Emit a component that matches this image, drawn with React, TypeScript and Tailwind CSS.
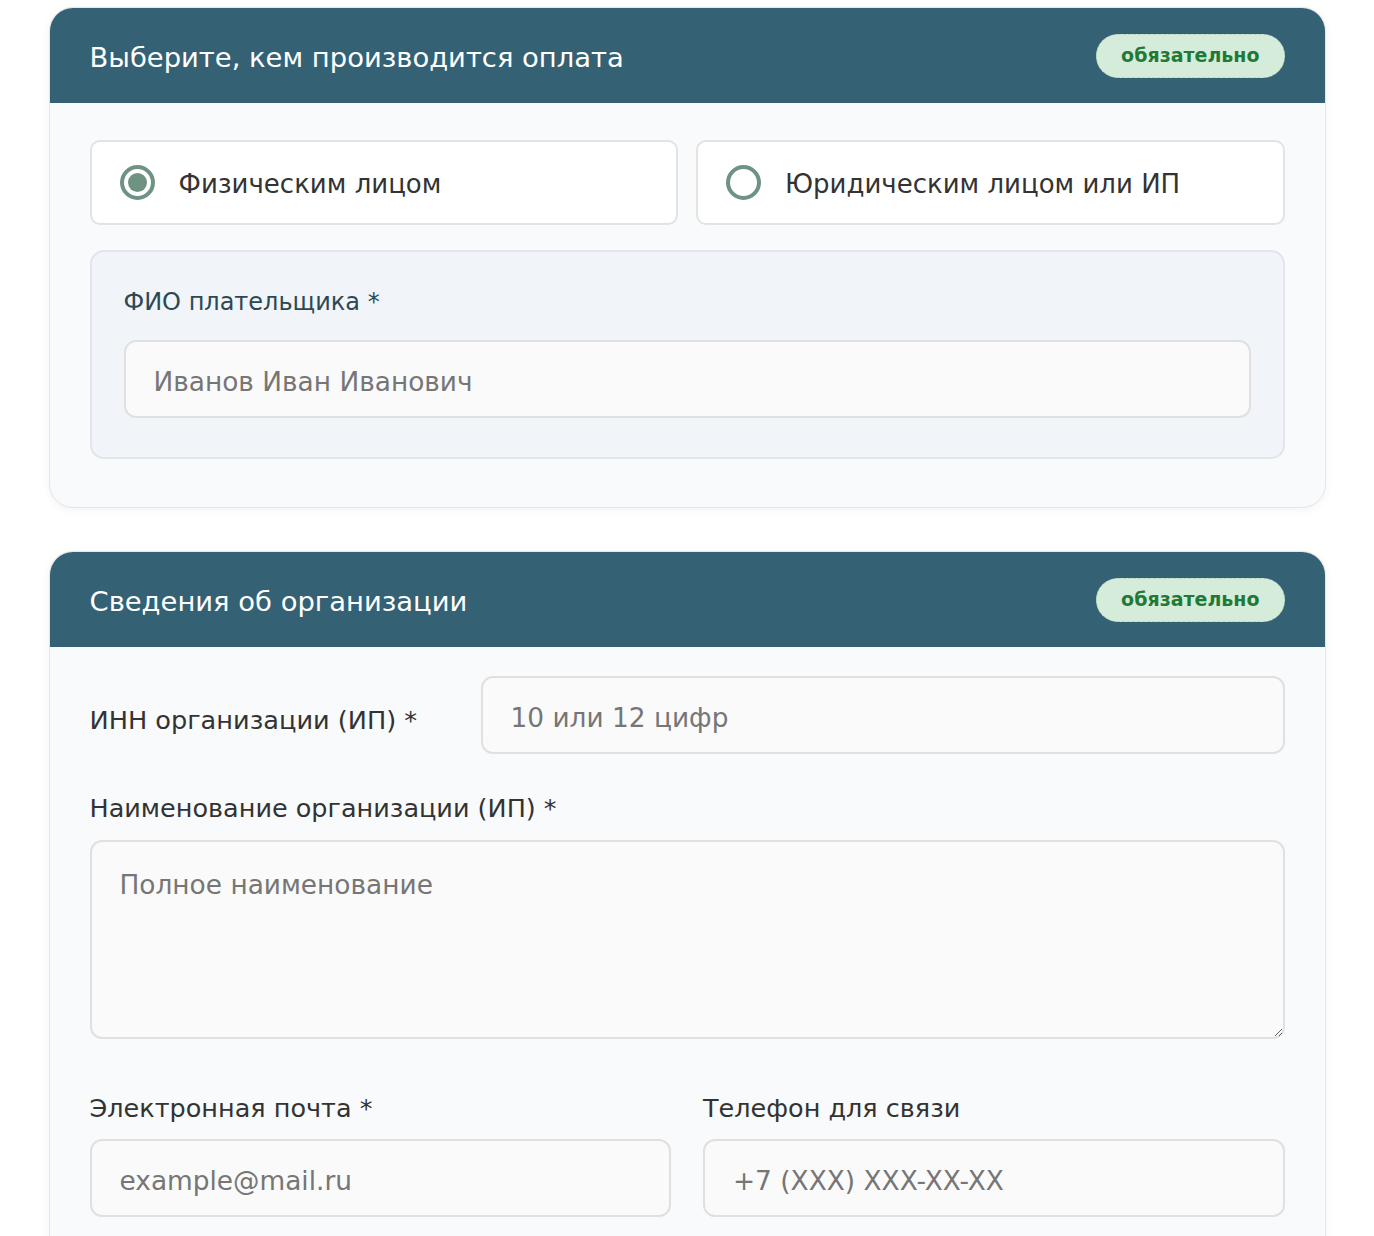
import React from "react";

function Badge() {
  return (
    <span className="inline-flex h-[44px] items-center rounded-full border border-dashed border-[#b9d8c0] bg-[#d5ecdb] px-[24px] text-[19px] font-bold leading-none text-[#1f7a38]">
      обязательно
    </span>
  );
}

function CardHeader({ title }: { title: string }) {
  return (
    <div className="flex h-[95px] items-center justify-between bg-[#346274] px-[40px]">
      <h2 className="pt-[4px] text-[27.4px] font-normal leading-none text-white">{title}</h2>
      <Badge />
    </div>
  );
}

function Radio({ checked, label }: { checked: boolean; label: string }) {
  return (
    <label className="flex h-[85px] items-center rounded-[10px] border-2 border-[#e3e3e3] bg-white pl-[28px]">
      <span className="flex h-[35px] w-[35px] shrink-0 items-center justify-center rounded-full border-[4px] border-[#6f9383] bg-white">
        {checked && <span className="h-[19px] w-[19px] rounded-full bg-[#6f9383]" />}
      </span>
      <span className="ml-[24px] pt-[3px] text-[26px] leading-none text-[#333333]">{label}</span>
    </label>
  );
}

const inputCls =
  "h-[78px] w-full rounded-[12px] border-2 border-[#e0e0e0] bg-[#fafafa] px-[28px] pt-[4px] text-[26.4px] text-[#333] outline-none placeholder:text-[#767676]";

export default function App() {
  return (
    <div className="min-h-[1236px] bg-white pt-[7px] font-['DejaVu_Sans',sans-serif]">
      <div className="mx-auto flex w-[1277px] flex-col gap-[43px]">
        {/* Card 1 */}
        <section className="overflow-hidden rounded-[24px] border border-[#e3e6ec] bg-[#f9fafb] shadow-[0_2px_10px_rgba(0,0,0,0.05)]">
          <CardHeader title="Выберите, кем производится оплата" />
          <div className="px-[40px] pb-[48px] pt-[37px]">
            <div className="grid grid-cols-2 gap-[18px]">
              <Radio checked label="Физическим лицом" />
              <Radio checked={false} label="Юридическим лицом или ИП" />
            </div>
            <div className="mt-[25px] rounded-[14px] border-2 border-[#e1e5ec] bg-[#f1f4f9] px-[32px] pb-[39px] pt-[34px]">
              <div className="mb-[22px] text-[24px] leading-[32px] text-[#2b4954]">ФИО плательщика *</div>
              <input readOnly className={inputCls} placeholder="Иванов Иван Иванович" />
            </div>
          </div>
        </section>

        {/* Card 2 */}
        <section className="overflow-hidden rounded-t-[24px] border border-b-0 border-[#e3e6ec] bg-[#f9fafb] shadow-[0_2px_10px_rgba(0,0,0,0.05)]">
          <CardHeader title="Сведения об организации" />
          <div className="px-[40px] pb-[40px] pt-[29px]">
            <div className="flex items-center">
              <div className="w-[391px] shrink-0 pt-[10px] text-[25.6px] leading-[32px] text-[#333]">ИНН организации (ИП) *</div>
              <input readOnly className={inputCls} placeholder="10 или 12 цифр" />
            </div>
            <div className="mt-[38px] text-[25.5px] leading-[32px] text-[#333]">Наименование организации (ИП) *</div>
            <textarea
              readOnly
              className="mt-[16px] block h-[199px] w-full rounded-[12px] border-2 border-[#e0e0e0] bg-[#fafafa] px-[28px] pt-[27px] text-[26.4px] leading-[32px] text-[#333] outline-none placeholder:text-[#767676]"
              placeholder="Полное наименование"
            />
            <div className="mt-[53px] grid grid-cols-2 gap-[32px]">
              <div>
                <div className="mb-[15px] text-[25.5px] leading-[32px] text-[#333]">Электронная почта *</div>
                <input readOnly className={inputCls} placeholder="example@mail.ru" />
              </div>
              <div>
                <div className="mb-[15px] text-[25.5px] leading-[32px] text-[#333]">Телефон для связи</div>
                <input readOnly className={inputCls} placeholder="+7 (XXX) XXX-XX-XX" />
              </div>
            </div>
          </div>
        </section>
      </div>
    </div>
  );
}
